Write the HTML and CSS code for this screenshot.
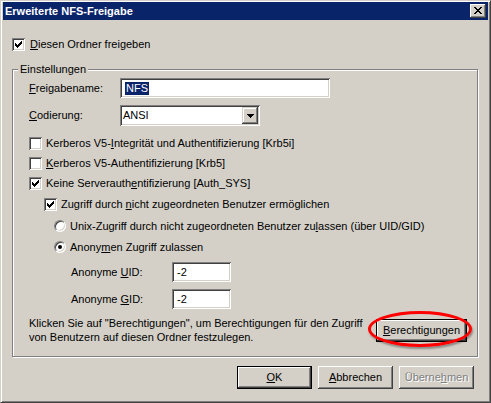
FILE: index.html
```html
<!DOCTYPE html>
<html lang="de">
<head>
<meta charset="utf-8">
<title>Erweiterte NFS-Freigabe</title>
<link rel="stylesheet" href="styles.css">
</head>
<body>
<div class="window">
  <div class="titlebar">
    <span class="title">Erweiterte NFS-Freigabe</span>
    <span class="caption-btn"><svg width="8" height="7" viewBox="0 0 8 7"><path d="M0 0h2v1h-2z M6 0h2v1h-2z M1 1h2v1h-2z M5 1h2v1h-2z M2 2h4v1h-4z M3 3h2v1h-2z M2 4h4v1h-4z M1 5h2v1h-2z M5 5h2v1h-2z M0 6h2v1h-2z M6 6h2v1h-2z" fill="#000"/></svg></span>
  </div>
  <div class="content">
    <div class="check share"><span class="cb"><svg class="tick" width="13" height="13" viewBox="0 0 13 13"><path d="M9 3h1v1h-1z M8 4h2v1h-2z M3 5h1v1h-1z M7 5h3v1h-3z M3 6h2v1h-2z M6 6h3v1h-3z M3 7h5v1h-5z M4 8h3v1h-3z M5 9h1v1h-1z" fill="#000"/></svg></span><span class="cap"><u>D</u>iesen Ordner freigeben</span></div>
    <div class="group">
      <span class="legend">Einstellungen</span>
      <div class="field name"><span class="lbl"><u>F</u>reigabename:</span><span class="edit edit-name"><span class="sel">NFS</span></span></div>
      <div class="field code"><span class="lbl"><u>C</u>odierung:</span><span class="combo"><span class="combo-val">ANSI</span><span class="combo-btn"><svg width="7" height="4" viewBox="0 0 7 4"><path d="M0 0h7v1h-7z M1 1h5v1h-5z M2 2h3v1h-3z M3 3h1v1h-1z" fill="#000"/></svg></span></span></div>
      <div class="check k1"><span class="cb"></span><span class="cap">Kerberos V5-<u>I</u>ntegrität und Authentifizierung [Krb5i]</span></div>
      <div class="check k2"><span class="cb"></span><span class="cap"><u>K</u>erberos V5-Authentifizierung [Krb5]</span></div>
      <div class="check k3"><span class="cb"><svg class="tick" width="13" height="13" viewBox="0 0 13 13"><path d="M9 3h1v1h-1z M8 4h2v1h-2z M3 5h1v1h-1z M7 5h3v1h-3z M3 6h2v1h-2z M6 6h3v1h-3z M3 7h5v1h-5z M4 8h3v1h-3z M5 9h1v1h-1z" fill="#000"/></svg></span><span class="cap">Keine Serverauth<u>e</u>ntifizierung [Auth_SYS]</span></div>
      <div class="check unmapped"><span class="cb"><svg class="tick" width="13" height="13" viewBox="0 0 13 13"><path d="M9 3h1v1h-1z M8 4h2v1h-2z M3 5h1v1h-1z M7 5h3v1h-3z M3 6h2v1h-2z M6 6h3v1h-3z M3 7h5v1h-5z M4 8h3v1h-3z M5 9h1v1h-1z" fill="#000"/></svg></span><span class="cap">Zugriff durch <u>n</u>icht zugeordneten Benutzer ermöglichen</span></div>
      <div class="radio r1"><span class="rb"></span><span class="cap">Unix-Zugriff durch nicht zugeordneten Benutzer zu<u>l</u>assen (über UID/GID)</span></div>
      <div class="radio r2"><span class="rb"><span class="dot"></span></span><span class="cap">Anony<u>m</u>en Zugriff zulassen</span></div>
      <div class="field idrow uid"><span class="lbl lbl-id">Anonyme <u>U</u>ID:</span><span class="edit edit-id">-2</span></div>
      <div class="field idrow gid"><span class="lbl lbl-id">Anonyme <u>G</u>ID:</span><span class="edit edit-id">-2</span></div>
      <div class="perm">
        <p class="hint">Klicken Sie auf "Berechtigungen", um Berechtigungen für den Zugriff<br>von Benutzern auf diesen Ordner festzulegen.</p>
        <span class="perm-wrap"><button class="btn default perm-btn"><u>B</u>erechtigungen</button><span class="highlight"></span></span>
      </div>
    </div>
    <div class="actions">
      <button class="btn default"><u>O</u>K</button>
      <button class="btn"><u>A</u>bbrechen</button>
      <button class="btn" disabled>Überne<u>h</u>men</button>
    </div>
  </div>
</div>
</body>
</html>
```
FILE: styles.css
```css
* { box-sizing: border-box; }

html, body {
  margin: 0;
  padding: 0;
  background: #d4d0c8;
}

body {
  width: 491px;
  height: 403px;
  overflow: hidden;
  font-family: "Liberation Sans", Arial, sans-serif;
  font-size: 11px;
  line-height: 13px;
  color: #000;
}

.window {
  width: 491px;
  height: 403px;
  background: #d4d0c8;
  border: 1px solid;
  border-color: #d4d0c8 #404040 #404040 #d4d0c8;
  box-shadow: inset 1px 1px #fff, inset -1px -1px #808080;
  padding: 1px 2px 2px 2px;
}

.titlebar {
  height: 18px;
  background: #0a246a;
  display: flex;
  align-items: center;
  justify-content: space-between;
  padding: 0 2px 0 2px;
}

.title {
  color: #fff;
  font-weight: bold;
  font-size: 11px;
}

.caption-btn {
  width: 16px;
  height: 14px;
  background: #d4d0c8;
  box-shadow: inset -1px -1px #404040, inset 1px 1px #fff, inset -2px -2px #808080, inset 2px 2px #d4d0c8;
  display: flex;
  align-items: center;
  justify-content: center;
  padding: 0 1px 1px 0;
}

.caption-btn svg { display: block; }

.content {
  padding: 0 10px 0 9px;
}

/* checkboxes */
.check, .radio {
  display: flex;
  align-items: center;
  gap: 4px;
  height: 13px;
  white-space: nowrap;
}

.cb {
  width: 13px;
  height: 13px;
  flex: none;
  background: #fff;
  box-shadow: inset 1px 1px #808080, inset -1px -1px #fff, inset 2px 2px #404040, inset -2px -2px #d4d0c8;
}

.cb svg { display: block; }

.share { margin-top: 18px; gap: 5px; }

.group {
  position: relative;
  margin-top: 18px;
  border: 1px solid #808080;
  box-shadow: inset 1px 1px #fff, 1px 1px #fff;
  padding: 8px 10px 12px 16px;
}

.legend {
  position: absolute;
  top: -7px;
  left: 5px;
  padding: 0 2px;
  background: #d4d0c8;
  line-height: 13px;
}

.field {
  display: flex;
  align-items: center;
  white-space: nowrap;
}

.lbl { width: 91px; flex: none; }

.edit {
  height: 20px;
  background: #fff;
  box-shadow: inset 1px 1px #808080, inset -1px -1px #fff, inset 2px 2px #404040, inset -2px -2px #d4d0c8;
  display: flex;
  align-items: center;
}

.edit-name {
  width: 210px;
  padding-left: 5px;
}

.sel {
  background: #0a246a;
  color: #fff;
  padding: 0 1px;
  line-height: 13px;
}

.code { margin-top: 7px; }

.combo {
  width: 140px;
  height: 21px;
  background: #fff;
  box-shadow: inset 1px 1px #808080, inset -1px -1px #fff, inset 2px 2px #404040, inset -2px -2px #d4d0c8;
  display: flex;
  align-items: center;
  justify-content: space-between;
  padding: 2px 2px 2px 3px;
}

.combo-btn {
  width: 16px;
  height: 17px;
  background: #d4d0c8;
  box-shadow: inset -1px -1px #404040, inset 1px 1px #d4d0c8, inset -2px -2px #808080, inset 2px 2px #fff;
  display: flex;
  align-items: center;
  justify-content: center;
  padding-left: 1px;
}

.combo-btn svg { display: block; }

.k1 { margin-top: 11px; }
.k2 { margin-top: 7px; }
.k3 { margin-top: 7px; }

.unmapped { margin-top: 8px; margin-left: 15px; }

.radio { height: 12px; gap: 4px; margin-left: 25px; }
.r1 { margin-top: 9px; }
.r2 { margin-top: 9px; }

.rb {
  width: 12px;
  height: 12px;
  flex: none;
  border-radius: 50%;
  background: #fff;
  border: 1px solid;
  border-color: #808080 #fff #fff #808080;
  box-shadow: inset 1px 1px #404040, inset -1px -1px #d4d0c8;
  display: flex;
  align-items: center;
  justify-content: center;
}

.dot {
  width: 4px;
  height: 4px;
  border-radius: 50%;
  background: #000;
}

.idrow { margin-left: 42px; }
.lbl-id { width: 101px; }
.uid { margin-top: 9px; }
.gid { margin-top: 7px; }

.edit-id {
  width: 59px;
  padding-left: 5px;
}

.perm {
  margin-top: 7px;
  display: flex;
  align-items: center;
  justify-content: space-between;
}

.hint {
  margin: 0;
  line-height: 14px;
  white-space: nowrap;
}

.perm-wrap {
  position: relative;
  display: block;
}

.btn {
  display: flex;
  align-items: center;
  justify-content: center;
  width: 75px;
  height: 23px;
  padding: 0;
  margin: 0;
  border: 0;
  background: #d4d0c8;
  font-family: "Liberation Sans", Arial, sans-serif;
  font-size: 11px;
  line-height: 13px;
  color: #000;
  box-shadow: inset -1px -1px #404040, inset 1px 1px #fff, inset -2px -2px #808080, inset 2px 2px #d4d0c8;
}

.btn.default {
  border: 1px solid #000;
}

.btn:disabled {
  color: #808080;
  text-shadow: 1px 1px #fff;
}

.perm-btn { width: 91px; }

.highlight {
  position: absolute;
  left: -8px;
  right: -5px;
  top: -8px;
  bottom: -5px;
  border: 3px solid #f00;
  border-radius: 50%;
  box-shadow: 1px 2px 2px rgba(0, 0, 0, 0.35);
  pointer-events: none;
}

.actions {
  margin-top: 9px;
  margin-right: 4px;
  display: flex;
  justify-content: flex-end;
  gap: 6px;
}
```
